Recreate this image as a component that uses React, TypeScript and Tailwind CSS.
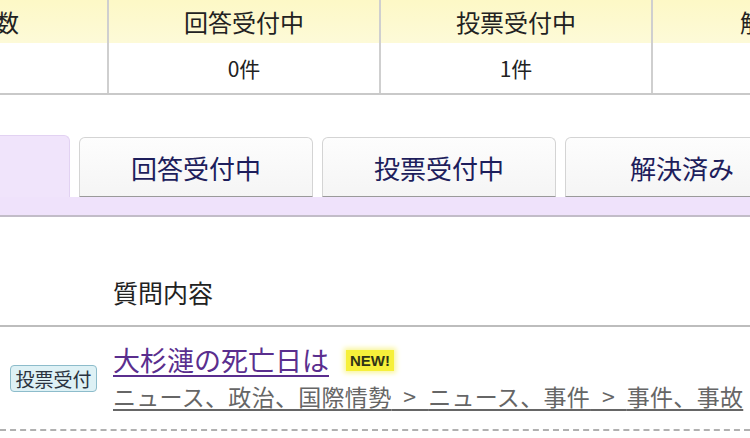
import React from "react";

const cols = [
  { h: "全質問数", v: "" },
  { h: "回答受付中", v: "0件" },
  { h: "投票受付中", v: "1件" },
  { h: "解決済み", v: "" },
];

const tabs = ["すべて", "回答受付中", "投票受付中", "解決済み"];

export default function App() {
  return (
    <div
      className="w-[750px] h-[438px] overflow-hidden bg-white text-[#222]"
      style={{ fontFamily: '"Noto Sans CJK JP", "Noto Sans", sans-serif' }}
    >
      {/* summary table */}
      <div className="flex ml-[-165px] border-b-2 border-[#c9c9c9] w-[1100px]">
        {cols.map((c, i) => (
          <div
            key={c.h}
            className={`w-[272px] shrink-0 flex flex-col ${i > 0 ? "border-l-2 border-[#cfcfcf]" : ""}`}
          >
            <div className="h-[43px] bg-gradient-to-b from-[#fdf8c6] to-[#fdfad8] flex items-center justify-center text-[24px] leading-none">
              {c.h}
            </div>
            <div className="h-[50px] flex items-center justify-center text-[21px] leading-none">
              {c.v}
            </div>
          </div>
        ))}
      </div>

      {/* tabs */}
      <div className="mt-[40px]">
        <div className="flex items-end gap-[9px] ml-[-164px] w-[1200px]">
          {tabs.map((t, i) =>
            i === 0 ? (
              <div
                key={t}
                className="w-[234px] h-[62px] shrink-0 bg-[#f0e4fb] border-t border-r border-[#e2d2f2] rounded-tr-[6px]"
              />
            ) : (
              <div
                key={t}
                className="w-[234px] h-[60px] shrink-0 bg-gradient-to-b from-[#fdfdfd] to-[#f5f5f5] border border-[#d4d4d4] border-b-[#9a9a9a] rounded-t-[6px] flex items-center justify-center pt-[2px] text-[26px] leading-none text-[#1e1e5c]"
              >
                {t}
              </div>
            )
          )}
        </div>
        <div className="h-[20px] bg-[#efe2fb] border-b-2 border-[#c2bcc8]" />
      </div>

      {/* list header */}
      <div className="h-[110px] flex items-end pb-[20px] pl-[113px] border-b-2 border-[#bdbdbd]">
        <span className="text-[25px] leading-[25px] text-[#222]">質問内容</span>
      </div>

      {/* list row */}
      <div className="h-[104px] flex items-center pl-[10px] border-b-2 border-dashed border-[#b0b0b0]">
        <div className="w-[87px] h-[27px] shrink-0 rounded-[4px] border border-[#8dbccb] bg-[#def1f5] flex items-center justify-center text-[19px] leading-none text-[#2a3340]">
          投票受付
        </div>
        <div className="ml-[16px] flex flex-col">
          <div className="flex items-center h-[36px]">
            <span className="text-[27px] leading-[36px] text-[#5a2e8e] underline underline-offset-[4px] decoration-[1.5px]">
              大杉漣の死亡日は
            </span>
            <span
              className="ml-[17px] px-[4px] h-[21px] flex items-center bg-[#f6f03a] text-[15px] font-bold leading-none text-[#2f3418] shadow-[0_0_5px_2px_#f9f59a]"
              style={{ fontFamily: '"Liberation Sans", Arial, sans-serif' }}
            >
              NEW!
            </span>
          </div>
          <div className="h-[36px] flex items-center">
            <span className="text-[23px] leading-[36px] text-[#666] tracking-[0.3px] underline underline-offset-[3px] decoration-[1.5px] whitespace-nowrap">
              ニュース、政治、国際情勢{"\u2002>\u2002"}ニュース、事件{"\u2002>\u2002"}事件、事故
            </span>
          </div>
        </div>
      </div>
    </div>
  );
}
